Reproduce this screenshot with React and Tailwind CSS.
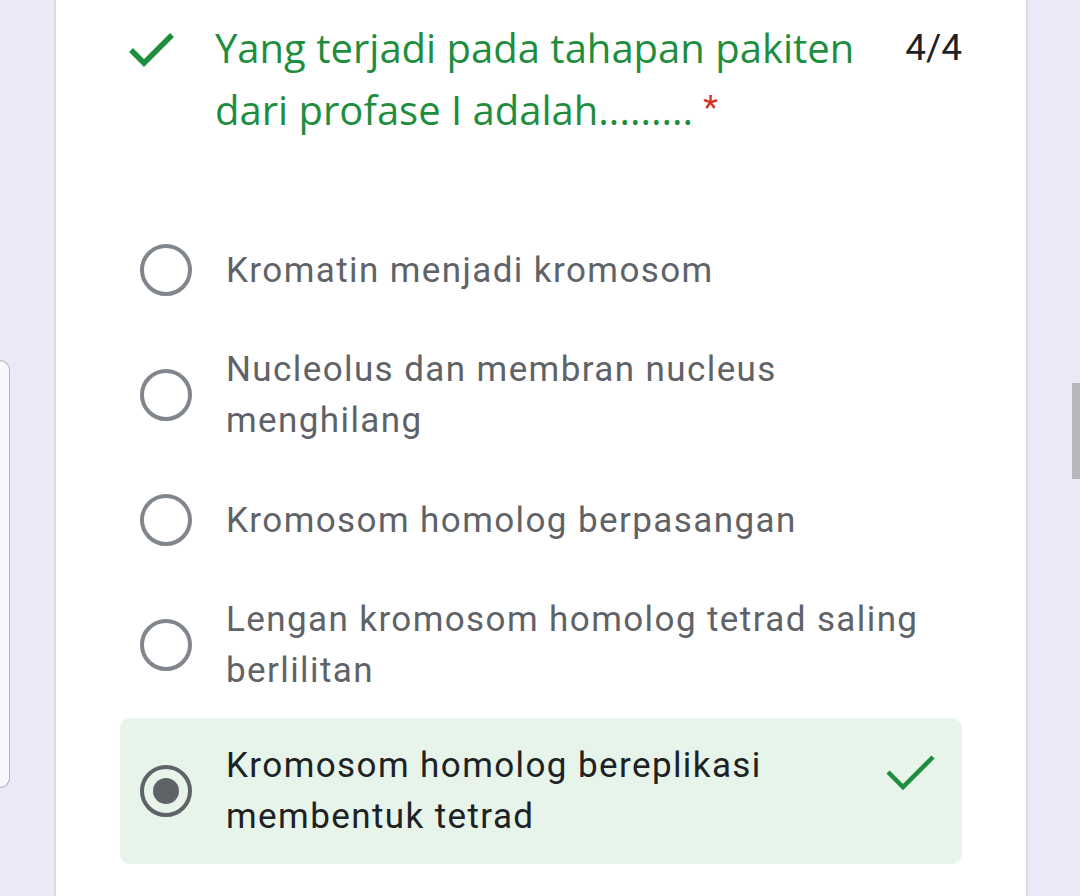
import React from "react";

const options = [
  "Kromatin menjadi kromosom",
  "Nucleolus dan membran nucleus menghilang",
  "Kromosom homolog berpasangan",
  "Lengan kromosom homolog tetrad saling berlilitan",
];

function Radio({ checked }) {
  if (checked) {
    return (
      <div className="w-[52px] h-[52px] shrink-0 rounded-full border-[4px] border-[#5f6368] flex items-center justify-center">
        <div className="w-[26px] h-[26px] rounded-full bg-[#5f6368]" />
      </div>
    );
  }
  return <div className="w-[52px] h-[52px] shrink-0 rounded-full border-[4px] border-[#80868b]" />;
}

export default function App() {
  return (
    <div className="w-[1080px] h-[896px] overflow-hidden bg-[#ece8f7] flex" style={{ fontFamily: "Roboto, sans-serif" }}>
      <div className="w-[54px] shrink-0 pt-[360px]">
        <div className="w-[10px] h-[428px] rounded-r-[10px] border border-l-0 border-[#b3b1b8] bg-[#f8f7fd]" />
      </div>
      <div className="w-[974px] shrink-0 bg-white border-x-2 border-[#dadce0]">
        <div className="flex pt-[17px] pl-[72px] pr-[64px]">
          <svg width="50" height="40" viewBox="0 0 50 40" className="shrink-0 mt-[14px]">
            <polyline points="3,19 16,32 44,4" fill="none" stroke="#1e8e3e" strokeWidth="5.5" />
          </svg>
          <div className="ml-[37px] w-[660px] text-[40px] leading-[62px] text-[#1e8e3e]" style={{ fontFamily: "'Open Sans', sans-serif" }}>
            Yang terjadi pada tahapan pakiten dari profase I adalah.........{" "}
            <span className="text-[#d93025] text-[34px] relative top-[-6px]" style={{ fontFamily: "Roboto, sans-serif" }}>*</span>
          </div>
          <div className="ml-auto text-[37px] leading-[62px] text-[#202124]">4/4</div>
        </div>
        <div className="mt-[76px] px-[64px] flex flex-col">
          {options.map((o) => (
            <div key={o} className="flex items-center px-[20px] py-[24px]">
              <Radio />
              <div className="ml-[34px] w-[700px] text-[35px] tracking-[1.4px] leading-[51px] text-[#5f6368]">{o}</div>
            </div>
          ))}
          <div className="flex items-center pl-[20px] pr-[26px] py-[22px] rounded-[10px] bg-[#e6f4ea] mt-[-2px]">
            <Radio checked />
            <div className="ml-[34px] w-[600px] text-[35px] tracking-[1.4px] leading-[51px] text-[#202124]">
              Kromosom homolog bereplikasi membentuk tetrad
            </div>
            <svg width="52" height="40" viewBox="0 0 52 40" className="ml-auto self-start mt-[14px] shrink-0">
              <polyline points="4,18 19,33 49,3" fill="none" stroke="#1e8e3e" strokeWidth="4.5" />
            </svg>
          </div>
        </div>
      </div>
      <div className="flex-1 flex justify-end pt-[383px]">
        <div className="w-[8px] h-[96px] bg-[#b9b6bd]" />
      </div>
    </div>
  );
}
